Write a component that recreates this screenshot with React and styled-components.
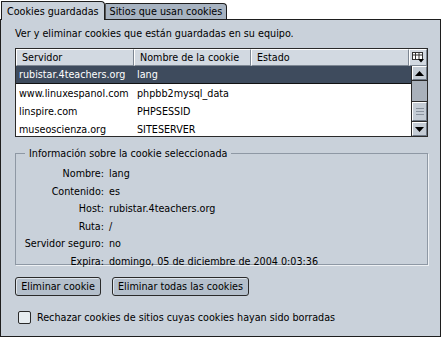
import React from 'react';
import styled, { createGlobalStyle } from 'styled-components';

const GlobalStyle = createGlobalStyle`
  html, body {
    margin: 0;
    padding: 0;
    background: #fff;
  }
  body {
    font-family: "DejaVu Sans Condensed", "Liberation Sans", sans-serif;
    font-size: 10.7px;
    color: #000;
  }
`;

const Window = styled.div`
  width: 441px;
`;

const TabStrip = styled.div`
  display: flex;
  align-items: flex-end;
  height: 19px;
  padding-left: 1px;
`;

const Tab = styled.div`
  box-sizing: border-box;
  position: relative;
  z-index: 1;
  height: ${(p) => (p.active ? '19px' : '16px')};
  margin-bottom: ${(p) => (p.active ? '-1px' : '0')};
  padding: 0 ${(p) => (p.active ? '5px' : '4px')};
  display: flex;
  align-items: center;
  border: 1px solid #1e1e1e;
  border-bottom: none;
  border-left-color: ${(p) => (p.active ? '#1e1e1e' : '#555')};
  border-radius: 0 4px 0 0;
  background: ${(p) => (p.active ? '#c9d1da' : '#a7b3c1')};
  white-space: nowrap;
  line-height: 13px;
`;

const Panel = styled.div`
  box-sizing: border-box;
  width: 441px;
  height: 318px;
  border: 1px solid #1e1e1e;
  background: #c9d1da;
  padding: 7px 12px 0 14px;
`;

const Intro = styled.div`
  line-height: 13px;
`;

const List = styled.div`
  margin-top: 8px;
  border: 1px solid #2a2a2a;
  background: #fff;
`;

const HeaderRow = styled.div`
  display: grid;
  grid-template-columns: 118px 117px 1fr 18px;
  height: 17px;
`;

const HeaderCell = styled.div`
  box-sizing: border-box;
  display: flex;
  align-items: center;
  padding-left: 5px;
  background: #d2d9e1;
  border-top: 1px solid #fff;
  border-left: 1px solid #fff;
  border-right: 1px solid #7d8793;
  border-bottom: 1px solid #7d8793;
  white-space: nowrap;
  overflow: hidden;
  line-height: 13px;
`;

const PickerCell = styled(HeaderCell)`
  padding: 0;
  justify-content: center;
`;

const ListBody = styled.div`
  display: flex;
  height: 70px;
  overflow: hidden;
`;

const Rows = styled.div`
  flex: 1;
`;

const Row = styled.div`
  display: grid;
  grid-template-columns: 118px 1fr;
  height: 18px;
  align-items: center;
  background: ${(p) => (p.selected ? '#3e4b5d' : '#fff')};
  color: ${(p) => (p.selected ? '#fff' : '#000')};
  border-bottom: ${(p) => (p.selected ? '1px solid #111' : 'none')};
  box-sizing: border-box;
  padding-left: 3px;
  white-space: nowrap;
  line-height: 13px;
`;

const Scrollbar = styled.div`
  width: 15px;
  display: flex;
  flex-direction: column;
  background: #a9b1bb;
  border-left: 1px solid #2a2a2a;
`;

const ScrollButton = styled.div`
  box-sizing: border-box;
  height: 14px;
  display: flex;
  align-items: center;
  justify-content: center;
  background: #c4ccd5;
  border-top: 1px solid #fff;
  border-left: 1px solid #fff;
  border-right: 1px solid #6f7986;
  border-bottom: 1px solid #6f7986;
  outline: 1px solid #2a2a2a;
`;

const Track = styled.div`
  flex: 1;
  display: flex;
  flex-direction: column;
  justify-content: flex-end;
  padding: 1px 0;
`;

const Thumb = styled.div`
  box-sizing: border-box;
  height: 19px;
  display: flex;
  flex-direction: column;
  align-items: center;
  justify-content: center;
  gap: 2px;
  background: #c4ccd5;
  border: 1px solid #6f7986;
  border-top-color: #fff;
  border-left-color: #fff;
  outline: 1px solid #2a2a2a;
`;

const Grip = styled.span`
  width: 8px;
  height: 1px;
  background: #8a939e;
`;

const Group = styled.fieldset`
  margin: 10px 0 0;
  padding: 7px 0 0;
  border: 1px solid #8e98a4;
  box-shadow: 1px 1px 0 #eef1f4;
`;

const Legend = styled.legend`
  margin-left: 9px;
  padding: 0 4px 0 4px;
  line-height: 13px;
`;

const Details = styled.dl`
  display: grid;
  grid-template-columns: 89px 1fr;
  column-gap: 5px;
  row-gap: 4.6px;
  margin: 0 0 -4px -1px;
  line-height: 13px;
`;

const Term = styled.dt`
  text-align: right;
  white-space: nowrap;
`;

const Value = styled.dd`
  margin: 0;
  white-space: nowrap;
`;

const Buttons = styled.div`
  display: flex;
  gap: 11px;
  margin-top: 12px;
`;

const Button = styled.button`
  box-sizing: border-box;
  height: 19px;
  width: ${(p) => p.w}px;
  padding: 0;
  font: inherit;
  color: #000;
  background: #b4bfcb;
  border: 1px solid #2a2a2a;
  border-radius: 3px;
  box-shadow: inset 1px 1px 0 #dfe5eb;
  line-height: 13px;
`;

const CheckRow = styled.label`
  display: flex;
  align-items: center;
  gap: 6px;
  margin-top: 15px;
  margin-left: 3px;
  line-height: 13px;
`;

const Box = styled.span`
  box-sizing: border-box;
  width: 13px;
  height: 13px;
  border: 1px solid #2a2a2a;
  border-radius: 2px;
  background: #e7edf1;
`;

const Arrow = ({ down }) => (
  <svg width="9" height="5" viewBox="0 0 9 5">
    <path d={down ? 'M0 0h9L4.5 5z' : 'M0 5h9L4.5 0z'} fill="#000" />
  </svg>
);

const ColumnPicker = () => (
  <svg width="12" height="11" viewBox="0 0 12 11">
    <rect x="0.5" y="0.5" width="10" height="7" fill="#fff" stroke="#333" />
    <path d="M0.5 3h10M3.5 0.5v7M7 0.5v7" stroke="#333" />
    <path d="M6 7h6l-3 3.5z" fill="#000" />
  </svg>
);

const cookies = [
  ['rubistar.4teachers.org', 'lang'],
  ['www.linuxespanol.com', 'phpbb2mysql_data'],
  ['linspire.com', 'PHPSESSID'],
  ['museoscienza.org', 'SITESERVER'],
];

const info = [
  ['Nombre:', 'lang'],
  ['Contenido:', 'es'],
  ['Host:', 'rubistar.4teachers.org'],
  ['Ruta:', '/'],
  ['Servidor seguro:', 'no'],
  ['Expira:', 'domingo, 05 de diciembre de 2004 0:03:36'],
];

const App = () => (
  <Window>
    <GlobalStyle />
    <TabStrip>
      <Tab active>Cookies guardadas</Tab>
      <Tab>Sitios que usan cookies</Tab>
    </TabStrip>
    <Panel>
      <Intro>Ver y eliminar cookies que están guardadas en su equipo.</Intro>
      <List>
        <HeaderRow>
          <HeaderCell>Servidor</HeaderCell>
          <HeaderCell>Nombre de la cookie</HeaderCell>
          <HeaderCell>Estado</HeaderCell>
          <PickerCell>
            <ColumnPicker />
          </PickerCell>
        </HeaderRow>
        <ListBody>
          <Rows>
            {cookies.map((c, i) => (
              <Row key={i} selected={i === 0}>
                <span>{c[0]}</span>
                <span>{c[1]}</span>
              </Row>
            ))}
          </Rows>
          <Scrollbar>
            <ScrollButton>
              <Arrow />
            </ScrollButton>
            <Track>
              <Thumb>
                <Grip />
                <Grip />
                <Grip />
              </Thumb>
            </Track>
            <ScrollButton>
              <Arrow down />
            </ScrollButton>
          </Scrollbar>
        </ListBody>
      </List>
      <Group>
        <Legend>Información sobre la cookie seleccionada</Legend>
        <Details>
          {info.map(([k, v]) => (
            <React.Fragment key={k}>
              <Term>{k}</Term>
              <Value>{v}</Value>
            </React.Fragment>
          ))}
        </Details>
      </Group>
      <Buttons>
        <Button w={86}>Eliminar cookie</Button>
        <Button w={137}>Eliminar todas las cookies</Button>
      </Buttons>
      <CheckRow>
        <Box />
        Rechazar cookies de sitios cuyas cookies hayan sido borradas
      </CheckRow>
    </Panel>
  </Window>
);

export default App;
